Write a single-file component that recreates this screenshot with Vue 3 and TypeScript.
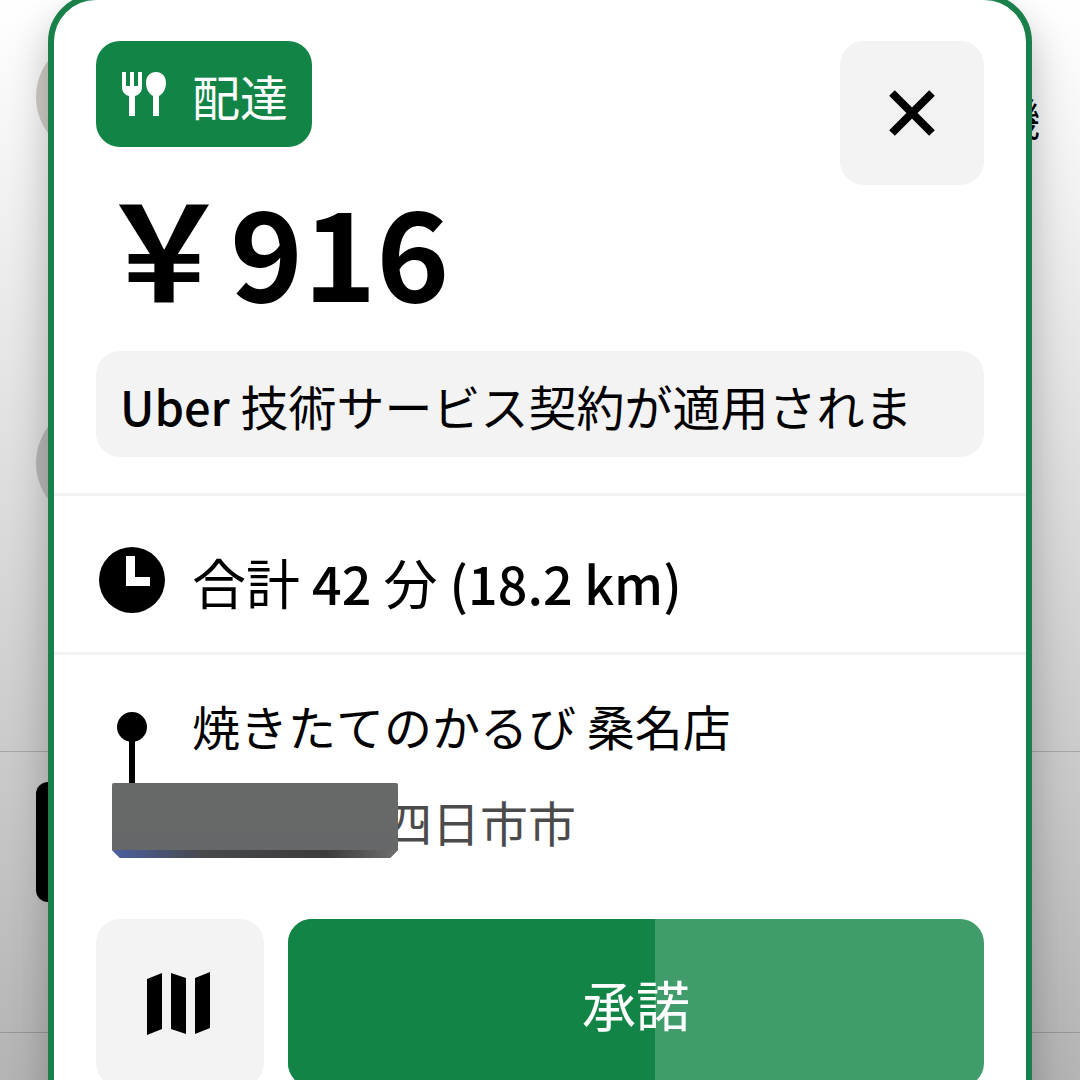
<script setup lang="ts">
interface TextRun {
  text: string
  latin?: boolean
}

interface Offer {
  kind: string
  currency: string
  amount: number
  notice: TextRun[]
  summary: TextRun[]
  pickup: string
  city: string
  elapsed: number
}

const offer: Offer = {
  kind: '配達',
  currency: '￥',
  amount: 916,
  notice: [{ text: 'Uber', latin: true }, { text: ' 技術サービス契約が適用されま' }],
  summary: [
    { text: '合計 ' },
    { text: '42', latin: true },
    { text: ' 分 ' },
    { text: '(18.2 km)', latin: true },
  ],
  pickup: '焼きたてのかるび 桑名店',
  city: '四日市市',
  elapsed: 52.8,
}
</script>

<template>
  <main class="screen">
    <div class="backdrop" aria-hidden="true">
      <div class="feed">
        <span class="avatar avatar-warm"></span>
        <span class="feed-text">機</span>
      </div>
      <div class="feed feed-second"><span class="avatar"></span></div>
      <div class="feed-action"><span class="feed-button"></span></div>
    </div>

    <article class="card">
      <section class="top">
        <div class="heading">
          <div class="heading-main">
            <div class="badge">
              <svg class="badge-icon" viewBox="0 0 48 48" aria-hidden="true">
                <path
                  fill="currentColor"
                  d="M2 2h4v14h4V2h4v14h4V2h4v15c0 5-3 8-7 9v20H9V26c-4-1-7-4-7-9z"
                />
                <path
                  fill="currentColor"
                  d="M36 2c6 0 10 4 10 11 0 6-3 11-7 13v20h-6V26c-4-2-7-7-7-13C26 6 30 2 36 2z"
                />
              </svg>
              <span>{{ offer.kind }}</span>
            </div>
            <h1 class="price">
              <span class="currency">{{ offer.currency }}</span
              ><span>{{ offer.amount }}</span>
            </h1>
          </div>
          <button class="close" type="button" aria-label="閉じる">
            <svg viewBox="0 0 48 48" aria-hidden="true">
              <path d="M4 4L44 44M44 4L4 44" fill="none" stroke="currentColor" stroke-width="8" />
            </svg>
          </button>
        </div>
        <p class="notice">
          <span v-for="run in offer.notice" :key="run.text" :class="{ latin: run.latin }">{{
            run.text
          }}</span>
        </p>
      </section>

      <section class="summary">
        <svg class="clock" viewBox="0 0 72 72" aria-hidden="true">
          <circle cx="36" cy="36" r="33" fill="#000" />
          <path d="M30 12h9v21h15v9H30z" fill="#fff" />
        </svg>
        <p class="summary-text">
          <span v-for="run in offer.summary" :key="run.text" :class="{ latin: run.latin }">{{
            run.text
          }}</span>
        </p>
      </section>

      <section class="route">
        <div class="stop">
          <svg class="pin" viewBox="0 0 72 96" aria-hidden="true">
            <circle cx="36" cy="27" r="15" fill="#000" />
            <path d="M33 36h6v60h-6z" fill="#000" />
          </svg>
          <div class="stop-text">
            <span class="stop-name">{{ offer.pickup }}</span>
            <span class="stop-city">{{ offer.city }}</span>
          </div>
          <span class="cover"></span>
        </div>
      </section>

      <footer class="actions">
        <button class="map" type="button" aria-label="地図">
          <svg viewBox="0 0 72 72" aria-hidden="true">
            <path
              fill="currentColor"
              d="M3 12l15-6v56l-15 6zM27 6l15 5v56l-15-5zM51 11l15-6v56l-15 6z"
            />
          </svg>
        </button>
        <button class="accept" type="button">
          <span class="progress" :style="{ width: offer.elapsed + '%' }"></span>
          <span class="accept-label">承諾</span>
        </button>
      </footer>
    </article>
  </main>
</template>

<style>
body {
  margin: 0;
}
</style>

<style scoped>
.screen {
  position: relative;
  height: 100vh;
  overflow: hidden;
  background: linear-gradient(#ffffff, #b4b4b4);
  color: #000;
  font-family: 'Noto Sans CJK JP', 'Noto Sans', sans-serif;
  font-size: 48px;
  line-height: 72px;
}

.screen *,
.screen *::before {
  box-sizing: border-box;
}

.latin {
  font-weight: 500;
}

.backdrop {
  position: absolute;
  inset: 0;
}

.feed {
  display: flex;
  justify-content: space-between;
  padding: 37px 40px 0 36px;
  height: 366px;
}

.feed-second {
  height: 386px;
  border-bottom: 1px solid #a3a6aa;
}

.avatar {
  width: 120px;
  height: 120px;
  border-radius: 50%;
  background: #b8b8b8;
}

.avatar-warm {
  background: #d0cdc5;
}

.feed-text {
  padding-top: 44px;
  font-size: 44px;
}

.feed-action {
  height: 281px;
  padding: 30px 36px;
  border-bottom: 1px solid #94979b;
}

.feed-button {
  display: block;
  width: 50%;
  height: 120px;
  border-radius: 12px;
  background: #000;
}

.card {
  position: relative;
  margin: -6px 48px 0;
  padding-bottom: 40px;
  border: 6px solid #188048;
  border-radius: 48px;
  background: #fff;
  box-shadow: 0 20px 40px rgba(0, 0, 0, 0.26);
}

.top {
  padding: 41px 42px 36px;
  border-bottom: 3px solid #f3f3f3;
}

.heading {
  display: flex;
  align-items: flex-start;
  justify-content: space-between;
}

.badge {
  display: inline-flex;
  align-items: center;
  gap: 24px;
  height: 106px;
  padding: 2px 24px 0;
  border-radius: 24px;
  background: #118446;
  color: #fff;
}

.badge-icon {
  width: 48px;
  height: 48px;
  margin-bottom: 2px;
}

.price {
  display: flex;
  align-items: baseline;
  height: 140px;
  margin: 28px 0 36px;
  padding-left: 2px;
  font-size: 124px;
  font-weight: 700;
  line-height: 140px;
}

.currency {
  font-size: 132px;
}

.close,
.map {
  display: flex;
  align-items: center;
  justify-content: center;
  flex: none;
  padding: 0;
  border: 0;
  border-radius: 24px;
  background: #f3f3f3;
  color: #000;
}

.close {
  width: 144px;
  height: 144px;
}

.close svg {
  width: 48px;
  height: 48px;
}

.notice {
  height: 106px;
  margin: 0;
  padding: 18px 24px 0;
  border-radius: 24px;
  background: #f3f3f3;
  white-space: pre;
  overflow: hidden;
}

.notice .latin {
  font-size: 47px;
}

.summary {
  display: flex;
  align-items: center;
  gap: 24px;
  height: 159px;
  padding: 12px 42px 0;
  border-bottom: 3px solid #f3f3f3;
  font-size: 54px;
}

.summary .latin {
  font-size: 52px;
}

.clock {
  flex: none;
  width: 72px;
  height: 72px;
}

.summary-text {
  margin: 0;
  padding-top: 4px;
  white-space: pre;
}

.route {
  padding: 34px 42px 0;
}

.stop {
  position: relative;
  display: flex;
  gap: 24px;
}

.pin {
  flex: none;
  width: 72px;
  height: 96px;
  margin-top: 11px;
}

.stop-text {
  display: flex;
  flex: 1;
  flex-direction: column;
  gap: 24px;
}

.stop-city {
  padding-left: 192px;
  color: #4b4b4b;
}

.cover {
  position: absolute;
  left: 16px;
  top: 94px;
  width: 286px;
  height: 75px;
  border-radius: 2px;
  background: linear-gradient(#686969, #666768);
  clip-path: polygon(0 0, 100% 0, 100% 67px, 278px 100%, 8px 100%, 0 67px);
}

.cover::before {
  content: '';
  position: absolute;
  inset: 67px 0 0;
  background: linear-gradient(90deg, #4a60a0, #48494c 32%, #3c3c3c 75%, #707070);
}

.actions {
  display: flex;
  gap: 24px;
  padding: 62px 42px 0;
}

.map {
  width: 168px;
  height: 168px;
}

.map svg {
  width: 72px;
  height: 72px;
}

.accept {
  position: relative;
  flex: 1;
  padding: 0;
  overflow: hidden;
  border: 0;
  border-radius: 24px;
  background: #409d6b;
  color: #fff;
  font-family: inherit;
  font-size: 54px;
}

.progress {
  position: absolute;
  inset: 0 auto 0 0;
  background: #118446;
}

.accept-label {
  position: relative;
}
</style>
